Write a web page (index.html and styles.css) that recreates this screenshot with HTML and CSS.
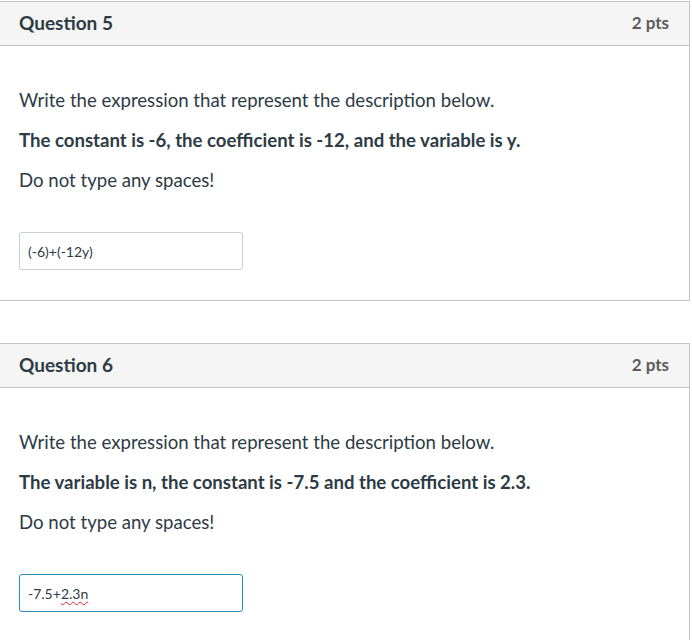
FILE: index.html
```html
<!DOCTYPE html>
<html>
<head>
<meta charset="utf-8">
<link rel="stylesheet" href="styles.css">
</head>
<body>
<div class="quiz">
  <section class="card">
    <header class="card-head">
      <h2 class="q-title">Question 5</h2>
      <span class="q-pts">2 pts</span>
    </header>
    <div class="card-body">
      <p>Write the expression that represent the description below.</p>
      <p class="strong">The constant is -6, the coefficient is -12, and the variable is y.</p>
      <p>Do not type any spaces!</p>
      <div class="answer">(-6)+(-12y)</div>
    </div>
  </section>
  <section class="card">
    <header class="card-head">
      <h2 class="q-title">Question 6</h2>
      <span class="q-pts">2 pts</span>
    </header>
    <div class="card-body">
      <p>Write the expression that represent the description below.</p>
      <p class="strong">The variable is n, the constant is -7.5 and the coefficient is 2.3.</p>
      <p>Do not type any spaces!</p>
      <div class="answer focused">-7.5+<span class="misspell">2.3n</span></div>
    </div>
  </section>
</div>
</body>
</html>
```
FILE: styles.css
```css
html, body {
  margin: 0;
  padding: 0;
  background: #fff;
}
body {
  font-family: Lato, "Open Sans", sans-serif;
  color: #2d3b45;
  overflow: hidden;
}
.quiz {
  display: flex;
  flex-direction: column;
  gap: 42px;
  padding-top: 1px;
  margin-left: -1px;
  margin-right: 2px;
}
.card {
  border: 1px solid #c4c4c4;
}
.card-head {
  display: flex;
  justify-content: space-between;
  align-items: center;
  box-sizing: border-box;
  height: 44px;
  padding: 0 20px 3px 19px;
  background: #f5f5f5;
  border-bottom: 1px solid #c4c4c4;
}
.q-title {
  margin: 0;
  font-size: 19px;
  font-weight: 700;
  color: #2d3b45;
}
.q-pts {
  font-size: 17px;
  font-weight: 700;
  color: #5b5b5b;
}
.card-body {
  padding: 42px 20px 30px 19px;
}
.card-body p {
  margin: 0 0 16px 0;
  font-size: 18.6px;
  line-height: 24px;
}
.card-body p.strong {
  font-weight: 700;
}
.answer {
  margin-top: 40px;
  box-sizing: border-box;
  width: 224px;
  height: 38px;
  padding: 0 8px;
  display: flex;
  align-items: center;
  font-size: 14px;
  color: #2d3b45;
  border: 1px solid #c7cdd1;
  border-radius: 3px;
  background: #fff;
}
.answer.focused {
  border-color: #2b8ac0;
}
.misspell {
  text-decoration: underline wavy #e02020;
  text-decoration-thickness: 1px;
  text-underline-offset: 2px;
}
```
